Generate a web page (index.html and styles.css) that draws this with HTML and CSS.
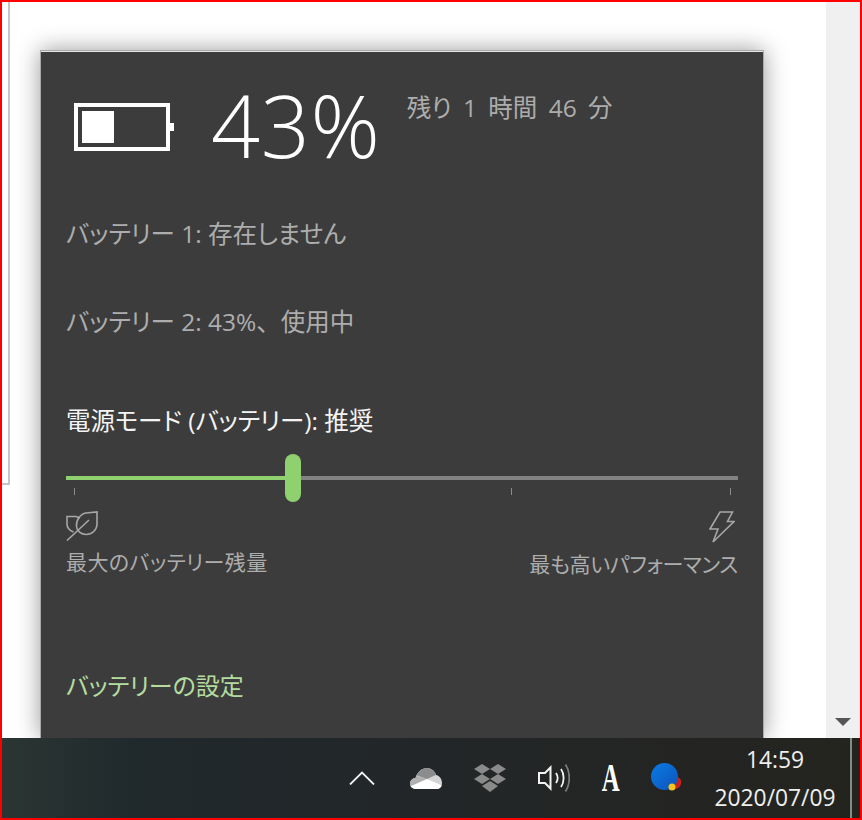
FILE: index.html
```html
<!DOCTYPE html>
<html lang="ja">
<head>
    <meta charset="UTF-8">
    <meta name="viewport" content="width=device-width, initial-scale=1.0">
    <title>バッテリー</title>
    <link rel="stylesheet" href="styles.css">
</head>
<body>
    <div class="screen">
        <!-- 背景のウィンドウ -->
        <div class="desktop">
            <div class="doc-edge"></div>
            <div class="doc"></div>
            <div class="scrollbar">
                <span class="scroll-arrow"></span>
            </div>

            <!-- バッテリーのフライアウト -->
            <section class="flyout">
                <div class="summary">
                    <svg class="battery" width="100" height="48" viewBox="0 0 100 48">
                        <rect x="2" y="2" width="92" height="44" fill="none" stroke="#fff" stroke-width="4"/>
                        <rect x="8" y="8" width="32" height="32" fill="#fff"/>
                        <rect x="96" y="20" width="4" height="8" fill="#fff"/>
                    </svg>
                    <div class="percent">43%</div>
                    <div class="remaining">残り 1 時間 46 分</div>
                </div>

                <p class="status status-first">バッテリー 1: 存在しません</p>
                <p class="status status-second">バッテリー 2: 43%<span class="full-width">、</span>使用中</p>
                <p class="mode">電源モード (バッテリー): 推奨</p>

                <div class="slider">
                    <div class="track-on"></div>
                    <div class="track-off"></div>
                    <div class="thumb"></div>
                </div>
                <div class="ticks">
                    <span class="tick"></span>
                    <span class="tick"></span>
                    <span class="tick"></span>
                    <span class="tick"></span>
                </div>

                <div class="ends">
                    <div class="end">
                        <svg width="32" height="30" viewBox="0 0 32 30" fill="none" stroke="#a6a6a6" stroke-width="1.6">
                            <path d="M31 1V13C31 19 26 23.5 20 23.5C15 23.5 11 20 10.5 15.5C10 9 14 3 20 2Z"/>
                            <path d="M7.5 21C3.5 19.5 1 17 1 13V5.5H10L14 7"/>
                            <path d="M1 29.5L23 9"/>
                        </svg>
                        <span class="end-label">最大のバッテリー残量</span>
                    </div>
                    <div class="end end-right">
                        <svg width="26" height="32" viewBox="0 0 26 32" fill="none" stroke="#a6a6a6" stroke-width="1.6">
                            <path d="M11 1H23.5L18.5 10.5H25L4 31L9 18H1Z"/>
                        </svg>
                        <span class="end-label">最も高いパフォーマンス</span>
                    </div>
                </div>

                <a class="settings" href="#">バッテリーの設定</a>
            </section>
        </div>

        <!-- タスクバー -->
        <footer class="taskbar">
            <div class="tray">
                <svg class="tray-chevron" width="26" height="14" viewBox="0 0 26 14" fill="none" stroke="#f2f2f2" stroke-width="1.8">
                    <path d="M1 13.5L13 1.5L25 13.5"/>
                </svg>
                <svg class="tray-cloud" width="32" height="21" viewBox="0 0 32 21">
                    <defs>
                        <clipPath id="cloud">
                            <path d="M6 21C2.500 21 0 18.500 0 15.500C0 12.500 2.500 10 5.500 10C7 4 12 0 17 0C21 0 25 3 26 7C29.500 7.500 32 11 32 15C32 18.500 30 21 27 21Z"/>
                        </clipPath>
                    </defs>
                    <g clip-path="url(#cloud)">
                        <rect width="32" height="21" fill="#d4d4d4"/>
                        <path d="M0 8H7L17 11L1 19H0Z" fill="#b0b0b0"/>
                        <path d="M5 0H28V6L17 11L6 7Z" fill="#8c8c8c"/>
                        <path d="M0 18.500L17 11L32 17.500V21H0Z" fill="#fff"/>
                    </g>
                </svg>
                <svg class="tray-dropbox" width="32" height="28" viewBox="0 0 32 28" fill="#8a8a8a">
                    <path d="M8 0L16 5L8 10L0 5Z"/>
                    <path d="M24 0L32 5L24 10L16 5Z"/>
                    <path d="M8 10L16 15L8 20L0 15Z"/>
                    <path d="M24 10L32 15L24 20L16 15Z"/>
                    <path d="M16 17L24 22L16 28L8 22Z"/>
                </svg>
                <svg class="tray-sound" width="32" height="28" viewBox="0 0 32 28" fill="none" stroke-width="1.8">
                    <path d="M1 9H7L12.5 3.5V24.5L7 19H1Z" stroke="#f2f2f2" stroke-width="2"/>
                    <path d="M18 9C20 12 20 16 18 19" stroke="#f2f2f2"/>
                    <path d="M23 5C26.5 10 26.5 18 23 23" stroke="#f2f2f2"/>
                    <path d="M27.500 0.500C32.500 8 32.500 20 27.500 27.500" stroke="#7c7c7c"/>
                </svg>
                <span class="tray-ime">A</span>
                <svg class="tray-ball" width="32" height="30" viewBox="0 0 32 30">
                    <defs>
                        <linearGradient id="ball" x1="0" y1="0" x2="1" y2="1">
                            <stop offset="0" stop-color="#0a7ce6"/>
                            <stop offset="1" stop-color="#0d52b8"/>
                        </linearGradient>
                    </defs>
                    <path d="M25 14C28 14 31 16 30 21C29 25 25 27 23 25Z" fill="#c9201c"/>
                    <circle cx="13.500" cy="13.500" r="13.500" fill="url(#ball)"/>
                    <circle cx="21" cy="24" r="3.500" fill="#f5c518"/>
                </svg>
            </div>
            <div class="clock">
                <div class="clock-time">14:59</div>
                <div class="clock-date">2020/07/09</div>
            </div>
            <div class="show-desktop"></div>
        </footer>
    </div>
</body>
</html>
```

FILE: styles.css
```css
* {
    box-sizing: border-box;
}
html, body {
    margin: 0;
    padding: 0;
}
body {
    width: 862px;
    height: 820px;
    overflow: hidden;
    font-family: "Open Sans", "Noto Sans CJK JP", sans-serif;
    font-feature-settings: "palt";
}
p {
    margin: 0;
}
.screen {
    width: 862px;
    height: 820px;
    border: 2px solid #f00;
    display: flex;
    flex-direction: column;
    background: #fff;
}

/* 背景のウィンドウ */
.desktop {
    position: relative;
    height: 736px;
    display: flex;
}
.doc-edge {
    width: 8px;
    height: 483px;
    border-right: 2px solid #c6c6c6;
    border-bottom: 2px solid #c6c6c6;
}
.doc {
    flex: 1;
}
.scrollbar {
    width: 34px;
    background: #f0f0f0;
    display: flex;
    flex-direction: column;
    justify-content: flex-end;
    align-items: center;
    padding-bottom: 12px;
}
.scroll-arrow {
    width: 0;
    height: 0;
    border-left: 8px solid transparent;
    border-right: 8px solid transparent;
    border-top: 8px solid #555;
}

/* フライアウト */
.flyout {
    position: absolute;
    left: 38px;
    top: 48px;
    width: 724px;
    height: 688px;
    padding: 0 25px;
    background: #3c3c3c;
    border: 1px solid #a9a9a9;
    border-bottom: none;
    box-shadow: inset 0 1px 0 #e6e6e6, 0 0 22px rgba(0, 0, 0, 0.4);
    color: #adadad;
}
.summary {
    display: flex;
    align-items: flex-start;
    height: 112px;
    margin-left: 8px;
    padding-top: 52px;
}
.battery {
    flex: none;
}
.percent {
    margin: -38px 0 0 37px;
    font-size: 86px;
    line-height: 120px;
    font-weight: 300;
    letter-spacing: 0.7px;
    color: #fff;
}
.remaining {
    margin: -13px 0 0 26px;
    font-size: 24.5px;
    line-height: 36px;
    word-spacing: 5px;
}
.status {
    font-size: 24.5px;
    line-height: 36px;
}
.status-first {
    margin-top: 53px;
}
.status-second {
    margin-top: 52px;
}
.full-width {
    font-feature-settings: normal;
}
.mode {
    margin-top: 63px;
    font-size: 24.5px;
    line-height: 36px;
    color: #f4f4f4;
}

/* スライダー */
.slider {
    position: relative;
    display: flex;
    height: 4px;
    margin-top: 37px;
}
.track-on {
    width: 226px;
    background: #8fd16e;
}
.track-off {
    flex: 1;
    background: #828282;
}
.thumb {
    position: absolute;
    left: 219px;
    top: -22px;
    width: 16px;
    height: 48px;
    border-radius: 8px;
    background: #8fd16e;
}
.ticks {
    display: flex;
    justify-content: space-between;
    margin-top: 8px;
    padding: 0 7px 0 8px;
}
.tick {
    width: 1px;
    height: 7px;
    background: #8c8c8c;
}
.ends {
    display: flex;
    justify-content: space-between;
    margin-top: 16px;
}
.end {
    display: flex;
    flex-direction: column;
    align-items: flex-start;
}
.end-right {
    align-items: flex-end;
}
.end-right svg {
    margin-right: 3px;
}
.end-label {
    margin-top: 6px;
    font-size: 21px;
    line-height: 30px;
    letter-spacing: 0.4px;
}
.end-right .end-label {
    letter-spacing: -0.3px;
}
.settings {
    display: block;
    margin-top: 90px;
    font-size: 24px;
    line-height: 34px;
    color: #b4dca0;
    text-decoration: none;
}

/* タスクバー */
.taskbar {
    position: relative;
    flex: 1;
    display: flex;
    align-items: center;
    background: linear-gradient(90deg, #2b3633, #20292c 15%, #232628 50%, #24241f);
}
.tray {
    display: flex;
    align-items: center;
    margin-left: 347px;
    width: 340px;
    height: 100%;
}
.tray-chevron {
    flex: none;
}
.tray-cloud {
    flex: none;
    margin-left: 35px;
}
.tray-dropbox {
    flex: none;
    margin-left: 32px;
}
.tray-sound {
    flex: none;
    margin-left: 32px;
}
.tray-ime {
    margin-left: 28px;
    width: 20px;
    text-align: center;
    font-family: "Liberation Serif", serif;
    font-weight: bold;
    font-size: 40px;
    line-height: 40px;
    color: #fff;
    transform: scaleX(0.62);
}
.tray-ball {
    flex: none;
    margin-left: 33px;
}
.clock {
    width: 140px;
    margin-left: 16px;
    padding-top: 1px;
    text-align: center;
    color: #efefef;
    font-size: 22.8px;
    line-height: 37px;
}
.clock-date {
    margin-top: 1px;
}
.show-desktop {
    width: 2px;
    height: 100%;
    margin-left: 5px;
    background: #8a8a8a;
}
```
